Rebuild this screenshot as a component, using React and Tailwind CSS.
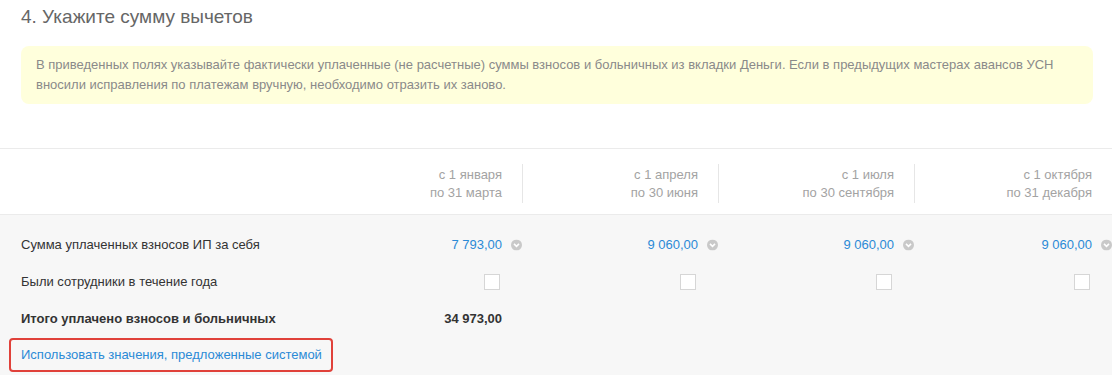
import React from 'react';

const periods = [
  { from: 'с 1 января', to: 'по 31 марта' },
  { from: 'с 1 апреля', to: 'по 30 июня' },
  { from: 'с 1 июля', to: 'по 30 сентября' },
  { from: 'с 1 октября', to: 'по 31 декабря' },
];

const paid = ['7 793,00', '9 060,00', '9 060,00', '9 060,00'];

function ChevronCircle() {
  return (
    <svg width="11" height="11" viewBox="0 0 11 11" className="absolute left-full ml-[9px] top-1/2 -translate-y-1/2">
      <circle cx="5.5" cy="5.5" r="5.5" fill="#c9c9c9" />
      <path d="M3 4.4 L5.5 6.9 L8 4.4" fill="none" stroke="#fff" strokeWidth="1.6" />
    </svg>
  );
}

export default function App() {
  return (
    <div className="w-[1112px] h-[375px] overflow-hidden bg-white font-['Liberation_Sans',Arial,sans-serif] text-[13px] text-[#333]">
      {/* Title */}
      <h2 className="px-[21px] pt-[5px] text-[19px] leading-[24px] text-[#666]">
        4. Укажите сумму вычетов
      </h2>

      {/* Notice */}
      <div className="mt-[17px] ml-[21px] mr-[19px] rounded-lg bg-[#ffffdc] px-[15px] py-[9px] leading-[20px] text-[#8a8a8a]">
        В приведенных полях указывайте фактически уплаченные (не расчетные) суммы взносов и больничных из вкладки Деньги. Если в предыдущих мастерах авансов УСН вносили исправления по платежам вручную, необходимо отразить их заново.
      </div>

      {/* Period header */}
      <div className="mt-[44px] border-t border-b border-[#ebebeb] h-[67px] grid grid-cols-[326px_196px_196px_196px_1fr]">
        <div />
        {periods.map((p, i) => (
          <div
            key={i}
            className={`mt-[15px] h-[39px] pr-[20px] text-right leading-[18px] text-[#a3a3a3] flex flex-col justify-center ${i > 0 ? 'border-l border-[#e6e6e6]' : ''}`}
          >
            <span>{p.from}</span>
            <span>{p.to}</span>
          </div>
        ))}
      </div>

      {/* Body */}
      <div className="bg-[#f7f7f7] pt-[11px] h-[200px]">
        <div className="grid grid-cols-[326px_196px_196px_196px_1fr] h-[37px] items-center">
          <div className="pl-[21px]">Сумма уплаченных взносов ИП за себя</div>
          {paid.map((v, i) => (
            <div key={i} className="pr-[20px] flex justify-end">
              <span className="relative text-[#2b8ad6]">
                {v}
                <ChevronCircle />
              </span>
            </div>
          ))}
        </div>

        <div className="grid grid-cols-[326px_196px_196px_196px_1fr] h-[37px] items-center">
          <div className="pl-[21px]">Были сотрудники в течение года</div>
          {paid.map((_, i) => (
            <div key={i} className="pr-[22px] flex justify-end">
              <span className="block w-[16px] h-[16px] bg-white border border-[#d6d6d6]" />
            </div>
          ))}
        </div>

        <div className="grid grid-cols-[326px_196px_196px_196px_1fr] h-[37px] items-center font-bold">
          <div className="pl-[21px]">Итого уплачено взносов и больничных</div>
          <div className="pr-[20px] text-right">34 973,00</div>
        </div>

        <div className="h-[35px] flex items-center">
          <div className="ml-[9px] w-[324px] h-[34px] flex items-center pl-[10px] border-2 border-[#e0413a] rounded-[4px]">
            <a className="text-[#2b8ad6] cursor-pointer whitespace-nowrap">Использовать значения, предложенные системой</a>
          </div>
        </div>
      </div>
    </div>
  );
}
